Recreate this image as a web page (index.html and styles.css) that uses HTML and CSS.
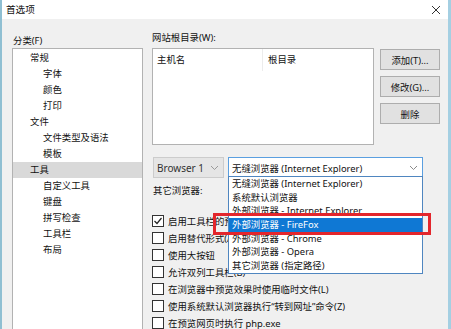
FILE: index.html
```html
<!DOCTYPE html>
<html lang="zh-CN">
  <head>
    <meta charset="UTF-8" />
    <meta name="viewport" content="width=device-width, initial-scale=1.0" />
    <title>首选项</title>
    <link rel="stylesheet" href="styles.css">
  </head>
  <body>
    <div class="window">
      <div class="titlebar">
        <span class="title">首选项</span>
        <svg class="close" width="10" height="10" viewBox="0 0 10 10">
          <path d="M1 1 L9 9 M9 1 L1 9" stroke="#333" stroke-width="1" fill="none" />
        </svg>
      </div>

      <div class="main">
        <div class="left-col">
          <div class="label label-left">分类(F)</div>
          <div class="tree">
            <div class="node lvl1">常规</div>
            <div class="node lvl2">字体</div>
            <div class="node lvl2">颜色</div>
            <div class="node lvl2">打印</div>
            <div class="node lvl1">文件</div>
            <div class="node lvl2">文件类型及语法</div>
            <div class="node lvl2">模板</div>
            <div class="node lvl1 selected">工具</div>
            <div class="node lvl2">自定义工具</div>
            <div class="node lvl2">键盘</div>
            <div class="node lvl2">拼写检查</div>
            <div class="node lvl2">工具栏</div>
            <div class="node lvl2">布局</div>
          </div>
        </div>

        <div class="right-col">
          <div class="label label-right">网站根目录(W):</div>
          <div class="hosts-row">
            <div class="hosts">
              <div class="hosts-head">
                <span class="col-host">主机名</span>
                <span class="col-root">根目录</span>
              </div>
            </div>
            <div class="btn-col">
              <button class="btn">添加(T)...</button>
              <button class="btn">修改(G)...</button>
              <button class="btn">删除</button>
            </div>
          </div>

          <div class="browser-row">
            <div class="select select-gray">
              <span>Browser 1</span>
              <svg class="chev" width="9" height="6" viewBox="0 0 9 6">
                <path d="M1 1 L4.5 4.5 L8 1" stroke="#9a9a9a" fill="none" />
              </svg>
            </div>
            <div class="combo-wrap">
              <div class="select select-focus">
                <span>无缝浏览器 (Internet Explorer)</span>
                <svg class="chev" width="9" height="6" viewBox="0 0 9 6">
                  <path d="M1 1 L4.5 4.5 L8 1" stroke="#8a8a8a" fill="none" />
                </svg>
              </div>
              <ul class="dropdown">
                <li>无缝浏览器 (Internet Explorer)</li>
                <li>系统默认浏览器</li>
                <li>外部浏览器 - Internet Explorer</li>
                <li class="active">外部浏览器 - FireFox</li>
                <li>外部浏览器 - Chrome</li>
                <li>外部浏览器 - Opera</li>
                <li>其它浏览器 (指定路径)</li>
              </ul>
              <div class="mark"></div>
            </div>
          </div>

          <div class="other-label">其它浏览器:</div>

          <div class="checks">
            <label class="check">
              <span class="box">
                <svg width="10" height="10" viewBox="0 0 10 10">
                  <path d="M1.5 5 L4 7.5 L8.5 2" stroke="#222" stroke-width="1.2" fill="none" />
                </svg>
              </span>
              启用工具栏的预览(P)
            </label>
            <label class="check"><span class="box"></span>启用替代形式(A)</label>
            <label class="check"><span class="box"></span>使用大按钮</label>
            <label class="check"><span class="box"></span>允许双列工具栏(B)</label>
            <label class="check"><span class="box"></span>在浏览器中预览效果时使用临时文件(L)</label>
            <label class="check"><span class="box"></span>使用系统默认浏览器执行“转到网址”命令(Z)</label>
            <label class="check"><span class="box"></span>在预览网页时执行 php.exe</label>
          </div>
        </div>
      </div>
    </div>
  </body>
</html>
```

FILE: styles.css
```css
:root {
  --dlg-bg: #f0f0f0;
  --frame: #8fbfd2;
  --line: #adadad;
  --accent: #0f78d4;
  --text: #111111;
}
body {
  margin: 0;
  padding: 0;
  background: #ffffff;
  font-family: "Noto Sans", "Noto Sans CJK SC", sans-serif;
  font-size: 9.4px;
  color: var(--text);
}
.window {
  position: relative;
  width: 451px;
  height: 329px;
  box-sizing: border-box;
  border-left: 2px solid var(--frame);
  border-right: 3px solid #a4cfe2;
  display: flex;
  flex-direction: column;
  overflow: hidden;
}
.titlebar {
  height: 19px;
  flex: none;
  background: #ffffff;
  display: flex;
  align-items: center;
  justify-content: space-between;
  padding: 0 7px 0 4px;
}
.title {
  font-size: 9.6px;
  line-height: 12px;
}
.main {
  flex: 1;
  background: var(--dlg-bg);
  display: flex;
  gap: 9px;
  padding-left: 10px;
  min-height: 0;
}
.label {
  height: 29px;
  flex: none;
  box-sizing: border-box;
  display: flex;
  align-items: flex-end;
  line-height: 12px;
}
.label-left {
  padding: 0 0 1px 1px;
}
.label-right {
  padding-bottom: 4px;
}

/* category tree */
.left-col {
  width: 131px;
  display: flex;
  flex-direction: column;
}
.tree {
  flex: 1;
  background: #ffffff;
  border: 1px solid #b2b2b2;
  padding-top: 1px;
  margin-bottom: -10px;
}
.node {
  height: 16px;
  line-height: 16px;
  white-space: nowrap;
}
.lvl1 {
  padding-left: 17px;
}
.lvl2 {
  padding-left: 30px;
}
.selected {
  background: #d9d9d9;
}

/* hosts table + buttons */
.right-col {
  flex: 1;
  display: flex;
  flex-direction: column;
  padding-right: 8px;
  min-width: 0;
}
.right-col > * {
  flex-shrink: 0;
}
.hosts-row {
  display: flex;
  gap: 6px;
}
.hosts {
  width: 222px;
  height: 97px;
  box-sizing: border-box;
  background: #ffffff;
  border: 1px solid #b2b2b2;
}
.hosts-head {
  display: flex;
  height: 22px;
  line-height: 22px;
}
.col-host {
  width: 105px;
  padding-left: 4px;
  border-right: 1px solid #ececec;
}
.col-root {
  padding-left: 5px;
}
.btn-col {
  display: flex;
  flex-direction: column;
  gap: 6px;
  padding-top: 1px;
}
.btn {
  width: 60px;
  height: 21px;
  padding: 0;
  background: #e1e1e1;
  border: 1px solid var(--line);
  font: inherit;
  color: var(--text);
}

/* browser selector */
.browser-row {
  display: flex;
  gap: 4px;
  margin-top: 12px;
}
.select {
  height: 21px;
  box-sizing: border-box;
  display: flex;
  align-items: center;
  justify-content: space-between;
  padding: 0 4px 0 3px;
  white-space: nowrap;
}
.select-gray {
  width: 71px;
  margin-left: 1px;
  background: #e5e5e5;
  border: 1px solid #cccccc;
  color: #333;
  font-size: 10px;
}
.select-focus {
  width: 195px;
  background: #ffffff;
  border: 1px solid #5a9fe0;
}
.combo-wrap {
  position: relative;
}
.dropdown {
  position: absolute;
  top: 19px;
  left: 0;
  width: 195px;
  box-sizing: border-box;
  margin: 0;
  padding: 0;
  list-style: none;
  background: #ffffff;
  border: 1px solid #4f86c0;
  z-index: 5;
}
.dropdown li {
  height: 13.7px;
  line-height: 13.7px;
  padding-left: 3px;
  white-space: nowrap;
}
.dropdown li.active {
  background: var(--accent);
  color: #ffffff;
}
.mark {
  position: absolute;
  left: -15px;
  top: 56px;
  width: 218px;
  height: 22px;
  box-sizing: border-box;
  border: 3px solid #e3262c;
  z-index: 6;
}

.other-label {
  line-height: 12px;
  margin-top: 7px;
  padding-left: 1px;
}

/* checkbox list */
.checks {
  display: flex;
  flex-direction: column;
  margin-top: 15px;
}
.check {
  height: 17px;
  display: flex;
  align-items: center;
  gap: 4px;
  white-space: nowrap;
}
.box {
  width: 12px;
  height: 12px;
  box-sizing: border-box;
  border: 1px solid #333;
  background: #ffffff;
  display: flex;
  align-items: center;
  justify-content: center;
  flex: none;
}
```
